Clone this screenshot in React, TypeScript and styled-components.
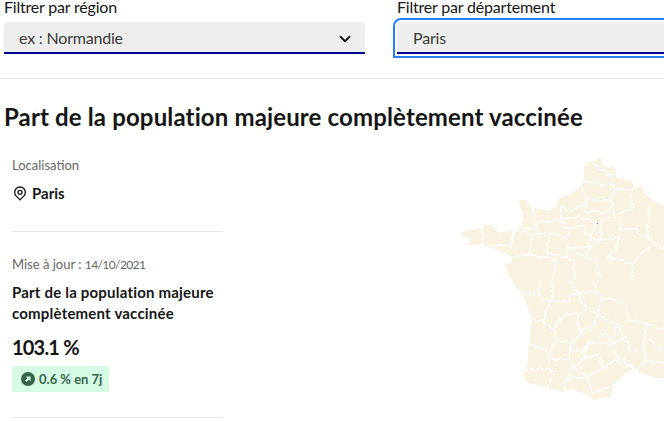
import React from 'react';
import styled, { createGlobalStyle } from 'styled-components';
import { ChevronDown } from 'lucide-react';

const GlobalStyle = createGlobalStyle`
    html, body {
        margin: 0;
        padding: 0;
        height: 421px;
        overflow: hidden;
        background: #fff;
        font-family: 'Lato', 'Liberation Sans', sans-serif;
        color: #161616;
    }
`;

// outlines are read off the screenshot at 3x: top half from (450,150), bottom half from (450,280)
const OUTLINE =
    'M584 165L587 162L595 161L597 158L601 158L603 166L609 168L613 166L616 170L616 178L627 180L632 181L633 189L642 186L644 193L650 197L654 202L664 205L664 378L655 378L647 375L640 372L632 370L625 373L620 377L615 382L612 387L611 397L600 398L593 400L588 395L578 391L570 388L565 392L556 390L547 388L537 385L527 382L521 375L526 371L528 360L530 337L532 318L530 312L528 307L525 300L522 295L516 287L512 280L508 273L505 265L512 262L512 257L493 248L482 245L465 245L470 242L470 238L462 237L462 232L475 229L482 228L485 225L492 225L497 231L500 233L508 231L515 230L522 227L523 218L523 213L520 207L518 200L527 200L530 205L532 209L550 210L558 205L556 200L567 195L578 189L583 183L584 175Z';

const NORTH_BORDERS = [
    'M400 85L415 95L430 95L450 105L470 100L490 110L490 118',
    'M430 30L445 55L470 65L485 85L490 105',
    'M395 112L410 140L408 185',
    'M410 145L430 150L450 155L470 150L485 145L490 118',
    'M490 118L545 118L545 150L550 175L530 180L510 190',
    'M485 145L483 180L510 215L510 250',
    'M408 185L440 185L480 190',
    'M247 175L255 190L250 222L290 215L330 210L355 235L360 265',
    'M330 170L335 205L365 205L390 200',
    'M330 170L365 185L385 170L408 165',
    'M215 235L240 237L265 232L265 250',
    'M95 235L100 285L130 290L160 285L180 290L195 240L245 250L240 315L185 320',
    'M245 250L300 250L290 310L350 320L355 290',
    'M300 250L320 255L355 265',
    'M360 235L395 225L420 265L420 290L395 295L355 290',
    'M395 205L440 215L420 265L455 270L450 215L480 200',
    'M355 290L400 320L430 285L450 270L480 265L510 265L495 300L475 320L480 335',
    'M510 240L550 235L575 255L600 270',
    'M600 170L595 205L590 240L600 270L643 300',
    'M240 315L280 320L320 330L310 390',
    'M350 320L370 330L375 390',
    'M475 320L510 330L550 345L545 390',
    'M545 345L570 315L600 290',
    'M400 320L440 330L450 390',
];

const SOUTH_BORDERS = [
    'M205 30L265 45L300 65L285 100L280 125L245 115',
    'M265 45L270 0',
    'M300 65L355 65L360 45L390 40L395 70L415 85L380 105L350 100L320 130L310 150L280 125',
    'M305 0L310 50L300 65',
    'M360 0L385 40L440 35L430 0',
    'M440 35L455 55L445 95L420 95',
    'M455 55L490 60L525 70L535 120L580 125L590 130',
    'M445 95L465 120L500 130L520 170L530 170',
    'M380 105L385 150L430 140L445 95',
    'M385 150L400 155L365 190L320 180L310 150',
    'M320 180L300 220L270 200L240 195',
    'M365 190L360 210L395 215L415 190L430 185L465 160L490 190L500 130',
    'M490 190L530 170L540 210L580 210L590 130L643 150',
    'M300 225L295 265L230 270',
    'M300 240L355 235L370 265L340 310L345 335',
    'M295 265L315 275L290 325',
    'M355 235L360 210',
    'M370 265L400 235L445 225L460 265L410 290L370 265',
    'M400 235L415 190L490 190L495 225L550 265L555 275',
    'M460 265L495 240L550 265',
    'M410 290L420 320L425 340L480 320',
    'M340 310L370 290L410 295',
    'M580 210L590 240L643 250',
    'M600 180L643 220',
    'M590 240L555 275',
];

// breaks a straight segment into short wobbling steps so borders read as hand-traced
const wobble = (d: string) => {
    const points = d.match(/-?\d+ -?\d+/g)!.map((p) => p.split(' ').map(Number));
    let out = `M${points[0][0]} ${points[0][1]}`;
    points.slice(1).forEach(([x, y], i) => {
        const [px, py] = points[i];
        const steps = Math.max(1, Math.round(Math.hypot(x - px, y - py) / 10));
        for (let s = 1; s <= steps; s++) {
            const t = s / steps;
            const nudge = s === steps ? 0 : Math.sin(px * 3.1 + py * 1.7 + s * 2.3) * 3.5;
            out += `L${(px + (x - px) * t + nudge).toFixed(1)} ${(py + (y - py) * t - nudge).toFixed(1)}`;
        }
    });
    return out;
};

const LocationIcon = () => (
    <svg width="16" height="16" viewBox="0 0 24 24" fill="currentColor" aria-hidden="true">
        <path d="M12 20.9l4.95-4.95a7 7 0 1 0-9.9 0L12 20.9zm0 2.83l-6.36-6.36a9 9 0 1 1 12.72 0L12 23.73zM12 13a2 2 0 1 0 0-4 2 2 0 0 0 0 4zm0 2a4 4 0 1 1 0-8 4 4 0 0 1 0 8z" />
    </svg>
);

const TrendIcon = () => (
    <svg width="14" height="14" viewBox="0 0 24 24" aria-hidden="true">
        <circle cx="12" cy="12" r="12" fill="#37634a" />
        <path d="M8 7.5h8.500V16l-3-3-4 4-2.500-2.500 4-4z" fill="#d7fce6" />
    </svg>
);

const FranceMap = () => (
    <MapSvg viewBox="450 150 214 260" aria-hidden="true">
        <path d={OUTLINE} fill="#faf2e0" />
        <g transform="translate(450 150) scale(0.3333)" fill="none" stroke="#fff" strokeWidth="4.5">
            {NORTH_BORDERS.map((d) => (
                <path key={d} d={wobble(d)} />
            ))}
        </g>
        <g transform="translate(450 280) scale(0.3333)" fill="none" stroke="#fff" strokeWidth="4.5">
            {SOUTH_BORDERS.map((d) => (
                <path key={d} d={wobble(d)} />
            ))}
        </g>
        <rect x="597" y="223" width="1" height="1" fill="#777" />
    </MapSvg>
);

export default function App() {
    return (
        <Page>
            <GlobalStyle />
            <Filters>
                <Filter>
                    <FilterLabel>Filtrer par région</FilterLabel>
                    <Select>
                        <span>ex : Normandie</span>
                        <Chevron size={18} strokeWidth={2.5} />
                    </Select>
                </Filter>
                <Filter>
                    <FilterLabel>Filtrer par département</FilterLabel>
                    <Select $focused>
                        <span>Paris</span>
                    </Select>
                </Filter>
            </Filters>
            <Divider />
            <Title>Part de la population majeure complètement vaccinée</Title>
            <Content>
                <Sidebar>
                    <Block>
                        <Caption>Localisation</Caption>
                        <Place>
                            <LocationIcon />
                            Paris
                        </Place>
                    </Block>
                    <Block>
                        <Caption>
                            Mise à jour : <DateText>14/10/2021</DateText>
                        </Caption>
                        <Metric>Part de la population majeure complètement vaccinée</Metric>
                        <Value>103.1 %</Value>
                        <Badge>
                            <TrendIcon />
                            0.6 % en 7j
                        </Badge>
                    </Block>
                </Sidebar>
                <FranceMap />
            </Content>
        </Page>
    );
}

const Page = styled.div`
    width: 664px;
    height: 421px;
    overflow: hidden;
`;
const Filters = styled.div`
    display: flex;
    gap: 32px;
    padding-left: 4px;
`;
const Filter = styled.div`
    flex: 0 0 361px;
    &:last-child {
        flex-basis: 330px;
    }
`;
const FilterLabel = styled.label`
    display: block;
    font-size: 16px;
    line-height: 14px;
    letter-spacing: -0.2px;
    margin-bottom: 8px;
`;
const Select = styled.div<{ $focused?: boolean }>`
    display: flex;
    align-items: center;
    justify-content: space-between;
    box-sizing: border-box;
    height: 32px;
    padding: 0 12px 0 15px;
    background: #eeeeee;
    border-radius: 4px 4px 0 0;
    border-bottom: 2px solid #000091;
    font-size: 16px;
    letter-spacing: -0.2px;
    color: #3a3a3a;
    ${({ $focused }) => $focused && 'padding-left: 16px; outline: 2px solid #2a7ffc; outline-offset: 2px;'}
`;
const Chevron = styled(ChevronDown)`
    margin: 3px -1px 0 0;
    color: #161616;
`;
const Divider = styled.hr`
    height: 1px;
    border: 0;
    margin: 24px 0 0;
    background: #e5e5e5;
`;
const Title = styled.h2`
    margin: 22px 0 0 4px;
    font-size: 24px;
    line-height: 32px;
    font-weight: 700;
    letter-spacing: 0.14px;
`;
const Content = styled.div`
    display: flex;
    justify-content: space-between;
    margin-top: 16px;
    padding-left: 12px;
`;
const Sidebar = styled.div`
    width: 211px;
    padding-top: 6px;
`;
const Block = styled.div`
    padding-bottom: 25px;
    margin-bottom: 22px;
    border-bottom: 1px solid #e5e5e5;
    &:first-child {
        padding-bottom: 26px;
    }
`;
const Caption = styled.div`
    height: 20px;
    font-size: 13px;
    line-height: 20px;
    color: #666;
`;
const DateText = styled.span`
    font-size: 12px;
    line-height: 1;
    letter-spacing: -0.6px;
`;
const Place = styled.div`
    display: flex;
    align-items: center;
    gap: 4px;
    margin-top: 6px;
    font-size: 15px;
    line-height: 24px;
    font-weight: 700;
`;
const Metric = styled.div`
    margin-top: 8px;
    font-size: 15px;
    line-height: 21px;
    font-weight: 700;
    letter-spacing: 0.2px;
`;
const Value = styled.div`
    margin-top: 9px;
    font-size: 20px;
    line-height: 28px;
    font-weight: 700;
    letter-spacing: -0.8px;
`;
const Badge = styled.div`
    display: flex;
    align-items: center;
    gap: 4px;
    width: fit-content;
    height: 26px;
    margin-top: 5px;
    padding: 0 7px 0 9px;
    background: #d7fce6;
    color: #37634a;
    font-size: 13px;
    font-weight: 700;
`;
const MapSvg = styled.svg`
    flex: none;
    width: 214px;
    height: 260px;
    margin-top: 1px;
    shape-rendering: crispEdges;
`;
